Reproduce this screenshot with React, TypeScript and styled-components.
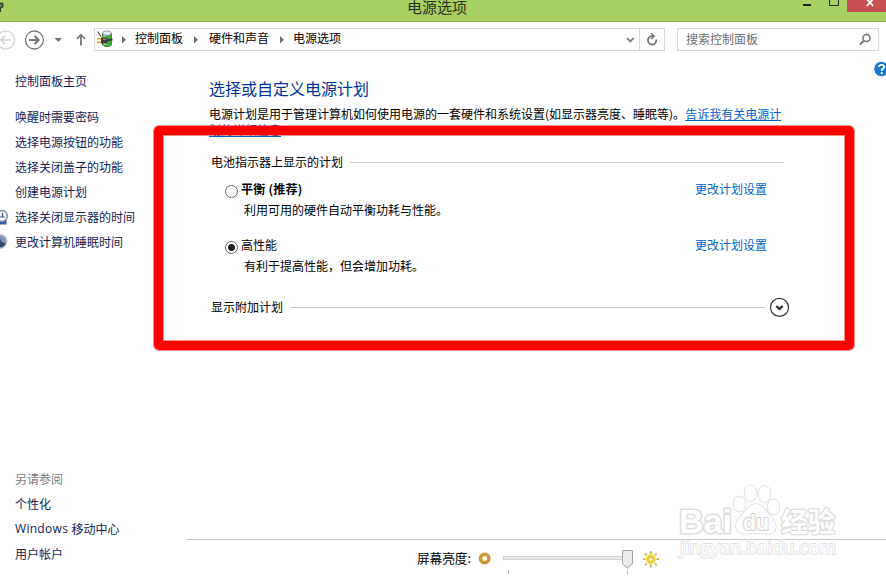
import React from "react";
import styled, { createGlobalStyle } from "styled-components";

const GlobalStyle = createGlobalStyle`
  html, body { margin: 0; padding: 0; background: #fff; overflow: hidden; }
  body { font-family: "Noto Sans CJK SC", "Noto Sans", sans-serif; font-size: 12px; color: #000; }
  svg { display: block; flex: none; }
`;

const Window = styled.div`
  position: relative;
  width: 886px;
  height: 579px;
  display: flex;
  flex-direction: column;
  overflow: hidden;
  background: #fff;
`;

const TitleBar = styled.header`
  flex: none;
  height: 22px;
  box-sizing: border-box;
  border-bottom: 1px solid #8fb454;
  background: #a8d062;
  display: flex;
  align-items: flex-start;
`;

const TitleIcon = styled.div`
  width: 60px;
`;

const Title = styled.h1`
  flex: 1;
  margin: 0;
  padding-left: 20px;
  font-size: 15px;
  font-weight: 400;
  line-height: 13px;
  color: #2c3020;
  text-align: center;
`;

const WindowButtons = styled.div`
  display: flex;
  width: 92px;
  height: 12px;
`;

const CloseButton = styled.div`
  width: 39px;
  height: 12px;
  background: #c75050;
`;

const NavBar = styled.nav`
  flex: none;
  display: flex;
  height: 23px;
  margin-top: 6px;
  padding-right: 7px;
`;

const AddressBox = styled.div`
  box-sizing: border-box;
  width: 571px;
  height: 23px;
  margin-left: 5px;
  border: 1px solid #d9d9d9;
  display: flex;
  align-items: center;
`;

const Crumb = styled.span`
  line-height: 21px;
  margin-top: -4px;
  white-space: nowrap;
`;

const SearchHint = styled.span`
  line-height: 21px;
  margin-top: -2px;
`;

const AddressActions = styled.div`
  margin-left: auto;
  display: flex;
`;

const RefreshCell = styled.div`
  border-left: 1px solid #d9d9d9;
`;

const SearchBox = styled.div`
  box-sizing: border-box;
  width: 202px;
  height: 23px;
  margin-left: auto;
  padding: 0 6px 0 8px;
  border: 1px solid #d9d9d9;
  display: flex;
  align-items: center;
  justify-content: space-between;
  color: #6d6d6d;
`;

const Body = styled.div`
  flex: 1;
  display: flex;
  min-height: 0;
`;

const Sidebar = styled.aside`
  width: 186px;
  display: flex;
  flex-direction: column;
`;

const SideLink = styled.div<{ $muted?: boolean }>`
  height: 25px;
  line-height: 25px;
  display: flex;
  align-items: center;
  white-space: nowrap;
  color: ${(p) => (p.$muted ? "#7b7b7b" : "#151c55")};
`;

const IconSlot = styled.span`
  flex: none;
  width: 15px;
`;

const SideHome = styled.div`
  padding: 17px 0 11px;
`;

const SideFooter = styled.div`
  margin-top: auto;
  padding-bottom: 13px;
`;

const LatinText = styled.span`
  font-family: "Open Sans", "Noto Sans", sans-serif;
  letter-spacing: 0.3px;
  white-space: pre;
`;

const Main = styled.main`
  flex: 1;
  display: flex;
  flex-direction: column;
`;

const Content = styled.section`
  flex: 1;
  position: relative;
  padding: 25px 0 0 23px;
`;

const Heading = styled.h2`
  margin: 0;
  font-size: 16px;
  line-height: 24px;
  font-weight: 400;
  color: #003399;
`;

const Description = styled.p`
  margin: 6px 0 0;
  width: 574px;
  line-height: 16px;
  word-break: break-all;
`;

const HelpLink = styled.a`
  color: #0066cc;
  text-decoration: underline;
  text-underline-offset: 1px;
`;

const HelpBadge = styled.div`
  position: absolute;
  top: 10px;
  right: -3px;
`;

const GroupHeader = styled.div<{ $width: number; $top: number }>`
  display: flex;
  align-items: center;
  width: ${(p) => p.$width}px;
  height: 20px;
  margin: ${(p) => p.$top}px 0 0 2px;
`;

const GroupTitle = styled.span`
  margin-top: -2px;
  white-space: nowrap;
`;

const Rule = styled.div<{ $gapRight?: number }>`
  flex: 1;
  height: 1px;
  margin: 0 ${(p) => p.$gapRight ?? 0}px 0 7px;
  background: #c9c9c9;
`;

const Plan = styled.div<{ $top: number }>`
  width: 558px;
  height: 42px;
  margin-top: ${(p) => p.$top}px;
`;

const PlanRow = styled.div`
  display: flex;
  height: 20px;
  line-height: 20px;
  padding-left: 15px;
`;

const Radio = styled.span<{ $checked?: boolean }>`
  box-sizing: border-box;
  width: 13px;
  height: 13px;
  margin: 6px 4px 0 1px;
  border: 1px solid #6a6a6a;
  border-radius: 50%;
  background: ${(p) =>
    p.$checked ? "radial-gradient(circle, #202020 3.1px, #fff 3.9px)" : "#fff"};
`;

const PlanName = styled.span<{ $bold?: boolean }>`
  font-weight: ${(p) => (p.$bold ? 700 : 400)};
  letter-spacing: ${(p) => (p.$bold ? "0.25px" : "0")};
  margin-left: -1px;
`;

const PlanLink = styled.a`
  margin-left: auto;
  color: #0066cc;
`;

const PlanNote = styled.div`
  padding-left: 35px;
  line-height: 21px;
`;

const BrightnessBar = styled.footer`
  box-sizing: border-box;
  height: 40px;
  border-top: 1px solid #c9c9c9;
  padding-left: 231px;
  display: flex;
`;

const BrightnessLabel = styled.span`
  width: 60px;
  line-height: 36px;
  font-size: 12.6px;
`;

const RedFrame = styled.div`
  position: absolute;
  left: 154px;
  top: 126px;
  width: 700px;
  height: 224px;
  box-sizing: border-box;
  border: 9px solid #ff0000;
  border-radius: 5px;
  box-shadow: 0 0 0 1px rgba(255, 0, 0, 0.45), inset 0 0 0 1px rgba(255, 0, 0, 0.45);
`;

const Watermark = styled.div`
  position: absolute;
  left: 676px;
  top: 480px;
`;

const BatteryIcon = () => (
  <svg width="21" height="21" viewBox="0 0 21 21">
    <path d="M7.5 4.5 Q12 2 16.5 4.5 L16.5 16 Q12 19.5 7.5 16Z" fill="#3fae3c" stroke="#3d6a42" strokeWidth=".8" />
    <path d="M9.5 6V16" stroke="#a5e592" strokeWidth="2" />
    <ellipse cx="12" cy="4.2" rx="4.2" ry="2.2" fill="#eceef8" stroke="#7079a0" strokeWidth=".8" />
    <path d="M2.5 2.5l3.5 5" stroke="#555" strokeWidth="1.2" />
    <path d="M2 9.7h4.5M2 13.2h4.5" stroke="#d8a51e" strokeWidth="1.6" />
    <path d="M6 8.5h2.5Q11.5 7.5 13 10L17.5 9.5V11.5L13.5 12Q11.5 15 8.5 14.5H6Z" fill="#3a3d3b" />
    <path d="M7.5 10l4 .3" stroke="#a5a5a5" />
  </svg>
);

const CrumbArrow = ({ width, x }: { width: number; x: number }) => (
  <svg width={width} height="21">
    <path d={`M${x} 7l4 3.7-4 3.8z`} fill="#747474" />
  </svg>
);

const sideLinks = ["唤醒时需要密码", "选择电源按钮的功能", "选择关闭盖子的功能", "创建电源计划"];

const plans = [
  { name: "平衡 (推荐)", note: "利用可用的硬件自动平衡功耗与性能。", bold: true, checked: false, top: 7 },
  { name: "高性能", note: "有利于提高性能，但会增加功耗。", bold: false, checked: true, top: 14 },
];

export default function App() {
  return (
    <>
      <GlobalStyle />
      <Window>
        <TitleBar>
          <TitleIcon>
            <svg width="8" height="14">
              <path d="M0 3.5Q2 2 3 5Q3 8 0 8" fill="#6f7c5c" stroke="#30382b" strokeWidth="1.2" />
              <path d="M0 8v4" stroke="#39422f" strokeWidth="2" />
            </svg>
          </TitleIcon>
          <Title>电源选项</Title>
          <WindowButtons>
            <svg width="53" height="12">
              <path d="M9 5h8" stroke="#222" strokeWidth="2" />
              <path d="M35.5 0v5.5h9V0" fill="none" stroke="#222" />
            </svg>
            <CloseButton>
              <svg width="39" height="12">
                <path d="M19.8 -1l6.4 7M26.2 -1l-6.4 7" stroke="#fff" strokeWidth="1.8" />
              </svg>
            </CloseButton>
          </WindowButtons>
        </TitleBar>

        <NavBar>
          <svg width="24" height="23" fill="none" stroke="#cfcfcf">
            <circle cx="5.5" cy="12" r="9" strokeWidth="1.2" />
            <path d="M11 12H1.5M5 8L1 12l4 4" strokeWidth="1.6" />
          </svg>
          <svg width="26" height="23" fill="none" stroke="#777">
            <circle cx="10.4" cy="12" r="9" strokeWidth="1.3" />
            <path d="M5 12h9.5M10.5 7.8L14.7 12l-4.2 4.2" strokeWidth="2" />
          </svg>
          <svg width="22" height="23">
            <path d="M4.5 10h7.5l-3.7 4z" fill="#757575" />
          </svg>
          <svg width="17" height="23" fill="none" stroke="#777" strokeWidth="1.8">
            <path d="M9 17.5V7M5 11l4-4.3 4 4.3" />
          </svg>
          <AddressBox>
            <BatteryIcon />
            <CrumbArrow width={19} x={6} />
            <Crumb>控制面板</Crumb>
            <CrumbArrow width={26} x={11} />
            <Crumb>硬件和声音</Crumb>
            <CrumbArrow width={24} x={11} />
            <Crumb>电源选项</Crumb>
            <AddressActions>
              <svg width="16" height="21" fill="none" stroke="#737373" strokeWidth="1.8">
                <path d="M4 9l3.3 3.5L10.6 9" />
              </svg>
              <RefreshCell>
                <svg width="24" height="21" fill="none" stroke="#737373" strokeWidth="1.7">
                  <path d="M16.2 10.5A4.2 4.2 0 1 1 12 7.2h1.5" />
                  <path d="M11 4.2l3.2 3-3 2.8" strokeWidth="1.4" />
                </svg>
              </RefreshCell>
            </AddressActions>
          </AddressBox>
          <SearchBox>
            <SearchHint>搜索控制面板</SearchHint>
            <svg width="14" height="21" fill="none" stroke="#757575">
              <circle cx="8.5" cy="9" r="3.5" strokeWidth="1.6" />
              <path d="M6 11.5L2 15.5" strokeWidth="2" />
            </svg>
          </SearchBox>
        </NavBar>

        <Body>
          <Sidebar>
            <SideHome>
              <SideLink><IconSlot />控制面板主页</SideLink>
            </SideHome>
            {sideLinks.map((text) => (
              <SideLink key={text}><IconSlot />{text}</SideLink>
            ))}
            <SideLink>
              <IconSlot>
                <svg width="15" height="18">
                  <rect x="-3" y="11" width="9" height="5" fill="#3054cc" stroke="#53618a" />
                  <circle cx="2" cy="8" r="5.4" fill="#f3f6fa" stroke="#858d99" strokeWidth="1.5" />
                  <path d="M2.5 4.5V9M0 9h5" stroke="#445473" fill="none" />
                </svg>
              </IconSlot>
              选择关闭显示器的时间
            </SideLink>
            <SideLink>
              <IconSlot>
                <svg width="15" height="18">
                  <circle cx="0" cy="8.5" r="6.9" fill="#7f98bb" stroke="#c3c9d0" strokeWidth="1.2" />
                  <path d="M0 4Q0 9 5.6 10.5Q3 15 0 14Z" fill="#3a4e75" />
                </svg>
              </IconSlot>
              更改计算机睡眠时间
            </SideLink>
            <SideFooter>
              <SideLink $muted><IconSlot />另请参阅</SideLink>
              <SideLink><IconSlot />个性化</SideLink>
              <SideLink><IconSlot /><LatinText>Windows </LatinText>移动中心</SideLink>
              <SideLink><IconSlot />用户帐户</SideLink>
            </SideFooter>
          </Sidebar>

          <Main>
            <Content>
              <HelpBadge>
                <svg width="15" height="16">
                  <circle cx="7.5" cy="8" r="7.3" fill="#1979ca" />
                  <path d="M5 6Q5 3.8 7.6 3.8T10.2 6Q10.2 7.3 8.6 8Q7.6 8.6 7.6 10" fill="none" stroke="#fff" strokeWidth="1.7" />
                  <rect x="6.7" y="11.2" width="1.9" height="1.9" fill="#fff" />
                </svg>
              </HelpBadge>
              <Heading>选择或自定义电源计划</Heading>
              <Description>
                电源计划是用于管理计算机如何使用电源的一套硬件和系统设置(如显示器亮度、睡眠等)。<HelpLink>告诉我有关电源计划的详细信息</HelpLink>
              </Description>
              <GroupHeader $width={573} $top={14}>
                <GroupTitle>电池指示器上显示的计划</GroupTitle>
                <Rule />
              </GroupHeader>
              {plans.map((plan) => (
                <Plan key={plan.name} $top={plan.top}>
                  <PlanRow>
                    <Radio $checked={plan.checked} />
                    <PlanName $bold={plan.bold}>{plan.name}</PlanName>
                    <PlanLink>更改计划设置</PlanLink>
                  </PlanRow>
                  <PlanNote>{plan.note}</PlanNote>
                </Plan>
              ))}
              <GroupHeader $width={579} $top={20}>
                <GroupTitle>显示附加计划</GroupTitle>
                <Rule $gapRight={5} />
                <svg width="20" height="20" fill="none">
                  <circle cx="9.5" cy="10.4" r="9" stroke="#333" strokeWidth="1.2" />
                  <path d="M6.3 9l3.2 3 3.2-3" stroke="#222" strokeWidth="2.2" />
                </svg>
              </GroupHeader>
            </Content>

            <BrightnessBar>
              <BrightnessLabel>屏幕亮度:</BrightnessLabel>
              <svg width="200" height="39">
                <circle cx="7.7" cy="18.5" r="4" fill="#fff" stroke="#d29a32" strokeWidth="3.2" />
                <circle cx="7.7" cy="18.5" r="5.5" fill="none" stroke="#a8752a" strokeWidth=".6" />
                <rect x="26.5" y="16.5" width="122" height="3" fill="#e7eaea" stroke="#d0d4d4" />
                <path d="M145.5 10.5h10v13l-5 5-5-5z" fill="#ebebeb" stroke="#a2a2a2" />
                <path d="M31.5 30v4M150.5 30v4" stroke="#bdbdbd" />
                <path d="M173.8 11v3M173.8 24.5v3M166 19.3h2.5M179.5 19.3h2.5M168 13.5l1.8 1.8M178 23.5l1.8 1.8M179.6 13.5l-1.8 1.8M169.8 23.5l-1.8 1.8" stroke="#c9a945" strokeWidth="1.6" />
                <circle cx="173.8" cy="19.3" r="3.7" fill="#fff8bd" stroke="#f0d53c" strokeWidth="2.6" />
                <circle cx="173.8" cy="19.3" r="2.2" fill="none" stroke="#c29d35" strokeWidth=".7" />
              </svg>
            </BrightnessBar>
          </Main>
        </Body>

        <RedFrame />

        <Watermark>
          <svg width="170" height="85" fill="#fff" stroke="#dedede" strokeWidth="1.6">
            <g fontFamily="Liberation Sans, Arial, sans-serif" strokeLinejoin="round" paintOrder="stroke">
              <text x="3" y="53" fontSize="34" fontWeight="700" textLength="53" lengthAdjust="spacingAndGlyphs" strokeWidth="3">Bai</text>
              <ellipse cx="63.5" cy="24" rx="6" ry="7.6" />
              <ellipse cx="74.5" cy="13" rx="6" ry="8" />
              <ellipse cx="88.5" cy="14" rx="6" ry="8" />
              <ellipse cx="97.5" cy="27" rx="6" ry="7.6" />
              <path d="M72 28Q80 20 88 28Q92 34 97 39Q104 51 93 54Q80 52 68 54Q56 51 62 39Q67 34 72 28Z" />
              <text x="67" y="50" fontSize="22" fontWeight="700" textLength="26" lengthAdjust="spacingAndGlyphs" stroke="#d2d2d2" strokeWidth="2">du</text>
              <text x="105" y="52" fontSize="27" fontWeight="700" fontFamily="Noto Sans CJK SC, sans-serif" strokeWidth="2.5">经验</text>
              <text x="4" y="74" fontSize="18" fontFamily="Open Sans, sans-serif" textLength="156" lengthAdjust="spacingAndGlyphs" strokeWidth="1.8" stroke="#e3e3e3">jingyan.baidu.com</text>
            </g>
          </svg>
        </Watermark>
      </Window>
    </>
  );
}
